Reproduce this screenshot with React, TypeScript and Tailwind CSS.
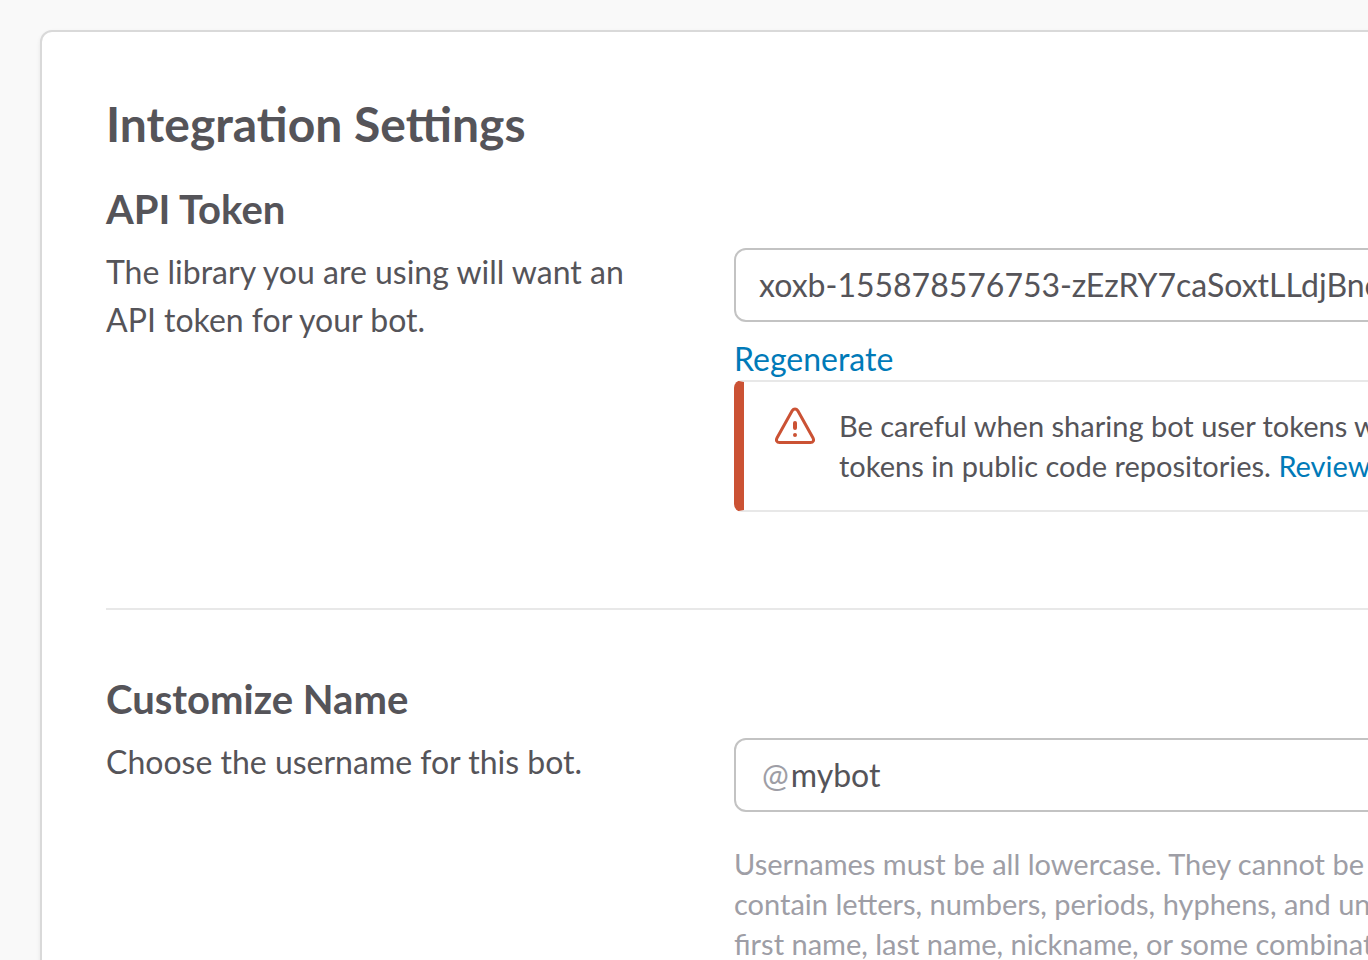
import React from "react";

const heading = "mb-[10px] text-[40px] font-bold leading-[58px]";
const description = "text-[32px] leading-[48px]";
const field = "flex h-[74px] items-center rounded-xl border-2 border-[#c3c3c3] bg-white text-[32px]";
const link = "text-[#007ab8]";

export default function App() {
  return (
    <div className="h-screen overflow-hidden bg-[#f9f9f9] pl-10 pt-[30px] font-['Lato',sans-serif] text-[#555459]">
      <main className="min-w-[1920px] rounded-xl border-2 border-[#d9d9d9] bg-white px-16 pt-16 pb-24 shadow-[0_2px_4px_rgba(0,0,0,0.08)]">
        <h1 className="text-[48px] font-bold leading-[56px]">Integration Settings</h1>

        <section className="flex border-b-2 border-[#e8e8e8] pt-7 pb-24">
          <div className="w-[628px] shrink-0 pr-20">
            <h2 className={heading}>
              <label htmlFor="token">API Token</label>
            </h2>
            <p className={description}>The library you are using will want an API token for your bot.</p>
          </div>
          <div className="flex-1 pt-[68px]">
            <div className={field + " px-[23px]"}>
              <input id="token" readOnly defaultValue="xoxb-155878576753-zEzRY7caSoxtLLdjBncQ" className="w-full outline-none" />
            </div>
            <a href="#regenerate" className={link + " mt-4 block text-[32px] leading-[42px]"}>Regenerate</a>
            <div className="flex gap-6 rounded-lg border-y-2 border-l-[10px] border-y-[#e8e8e8] border-l-[#cb5234] py-6 pl-[31px]">
              <svg viewBox="0 0 40 40" className="h-10 w-10 shrink-0" fill="none" stroke="#cb5234" strokeWidth="3" strokeLinecap="round" strokeLinejoin="round" aria-hidden="true">
                <path d="M17.300 4.600 2.100 31.700C.700 34.300 1.700 36.500 4.600 36.500h30.800c2.900 0 3.900-2.200 2.500-4.800L22.700 4.600c-1.400-2.200-4-2.200-5.400 0Z" />
                <path d="M20 17v5M20 28.900v.2" strokeWidth="4" />
              </svg>
              <p className="text-[29px] leading-10">
                Be careful when sharing bot user tokens with<br />
                tokens in public code repositories. <a href="#review" className={link}>Review</a>
              </p>
            </div>
          </div>
        </section>

        <section className="flex pt-[60px]">
          <div className="w-[628px] shrink-0 pr-20">
            <h2 className={heading}>
              <label htmlFor="username">Customize Name</label>
            </h2>
            <p className={description}>Choose the username for this bot.</p>
          </div>
          <div className="flex-1 pt-[68px]">
            <div className={field + " gap-0.5 px-[26px]"}>
              <span className="text-[#9e9ea6]">@</span>
              <input id="username" defaultValue="mybot" className="w-full outline-none" />
            </div>
            <p className="mt-8 text-[29px] leading-10 text-[#9e9ea6]">
              Usernames must be all lowercase. They cannot be<br />
              contain letters, numbers, periods, hyphens, and underscores.<br />
              first name, last name, nickname, or some combination
            </p>
          </div>
        </section>
      </main>
    </div>
  );
}
